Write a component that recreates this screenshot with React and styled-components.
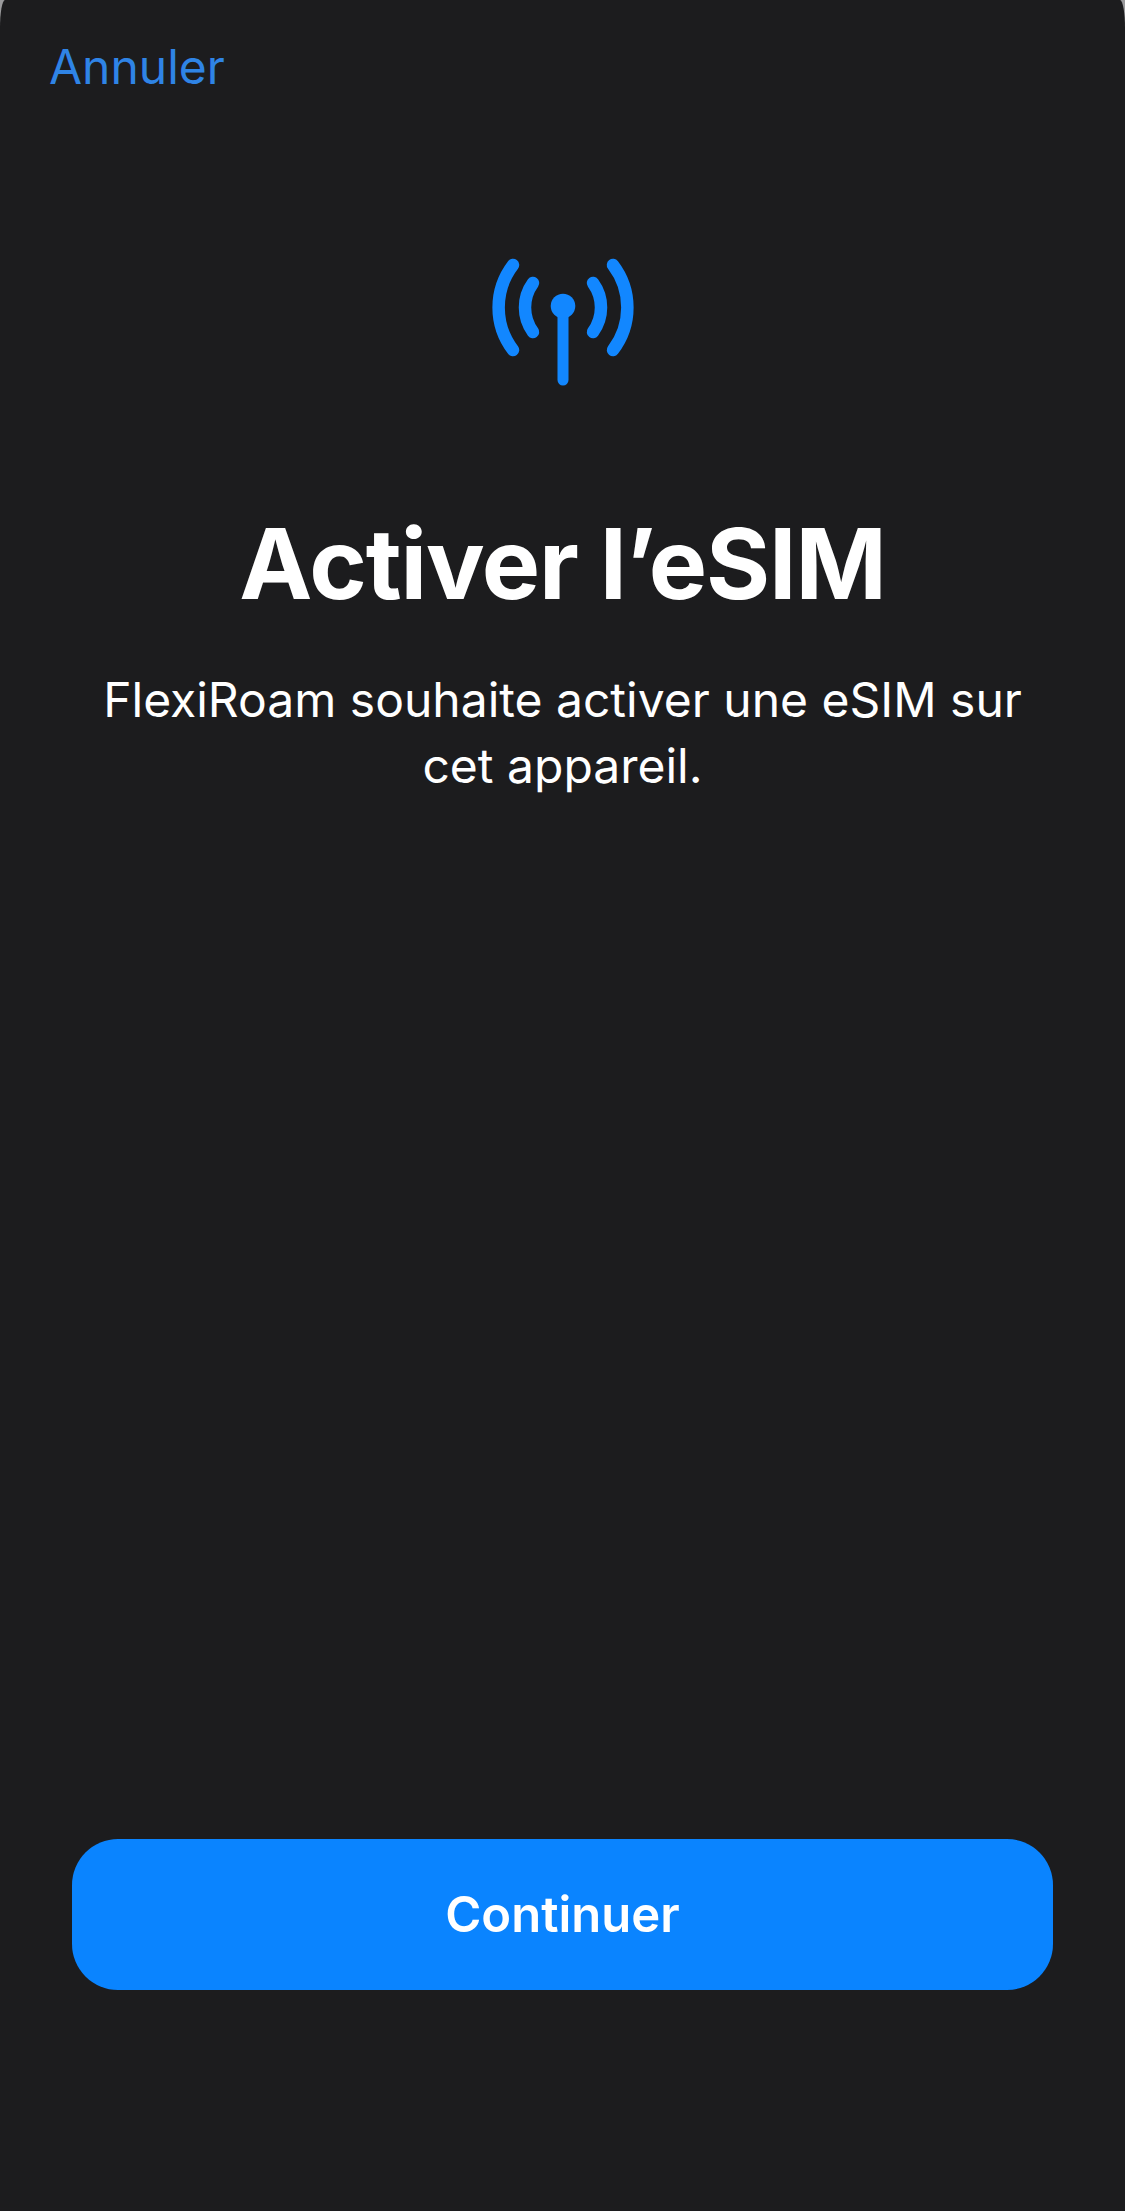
import React from "react";
import styled, { createGlobalStyle } from "styled-components";

const colors = {
  bg: "#1c1c1e",
  blue: "#0a84ff",
  icon: "#1287ff",
  link: "#2f84e6",
};

const GlobalStyle = createGlobalStyle`
  html, body {
    margin: 0;
    padding: 0;
    background: #9a9a9c;
  }
`;

const Screen = styled.div`
  width: 1125px;
  height: 2211px;
  box-sizing: border-box;
  display: flex;
  flex-direction: column;
  align-items: center;
  background: ${colors.bg};
  border-top-left-radius: 5px 28px;
  border-top-right-radius: 5px 28px;
  font-family: Inter, "Liberation Sans", sans-serif;
  color: #ffffff;
`;

const TopBar = styled.div`
  width: 100%;
  box-sizing: border-box;
  padding: 36px 49px 0;
`;

const CancelLink = styled.a`
  display: block;
  font-size: 48px;
  line-height: 62px;
  color: ${colors.link};
`;

const IconWrap = styled.div`
  margin-top: 157px;
  height: 135px;
  display: flex;
  justify-content: center;
`;

const Title = styled.h1`
  margin: 116px 0 0;
  font-size: 98px;
  line-height: 116px;
  font-weight: 700;
  letter-spacing: -1.1px;
  text-align: center;
`;

const Message = styled.p`
  margin: 45px 0 0;
  width: 960px;
  font-size: 48px;
  line-height: 66px;
  font-weight: 400;
  text-align: center;
`;

const Spacer = styled.div`
  flex: 1;
`;

const ContinueButton = styled.button`
  width: 981px;
  height: 151px;
  margin-bottom: 221px;
  border: none;
  border-radius: 46px;
  background: ${colors.blue};
  color: #ffffff;
  font-family: inherit;
  font-size: 49px;
  font-weight: 600;
`;

const AntennaIcon = () => (
  <svg width="156" height="135" viewBox="0 0 156 135" fill="none" stroke={colors.icon} strokeLinecap="round" strokeWidth="12.5">
    <path d="M28 10A70 70 0 0 0 28 95" />
    <path d="M128 10A70 70 0 0 1 128 95" />
    <path d="M48 28A41.5 41.5 0 0 0 48 77" />
    <path d="M108 28A41.5 41.5 0 0 1 108 77" />
    <path d="M78 51V125" strokeWidth="11" />
    <circle cx="78" cy="51" r="12.3" fill={colors.icon} stroke="none" />
  </svg>
);

const App = () => {
  return (
    <>
      <GlobalStyle />
      <Screen>
        <TopBar>
          <CancelLink>Annuler</CancelLink>
        </TopBar>
        <IconWrap>
          <AntennaIcon />
        </IconWrap>
        <Title>Activer l’eSIM</Title>
        <Message>FlexiRoam souhaite activer une eSIM sur cet appareil.</Message>
        <Spacer />
        <ContinueButton>Continuer</ContinueButton>
      </Screen>
    </>
  );
};

export default App;
